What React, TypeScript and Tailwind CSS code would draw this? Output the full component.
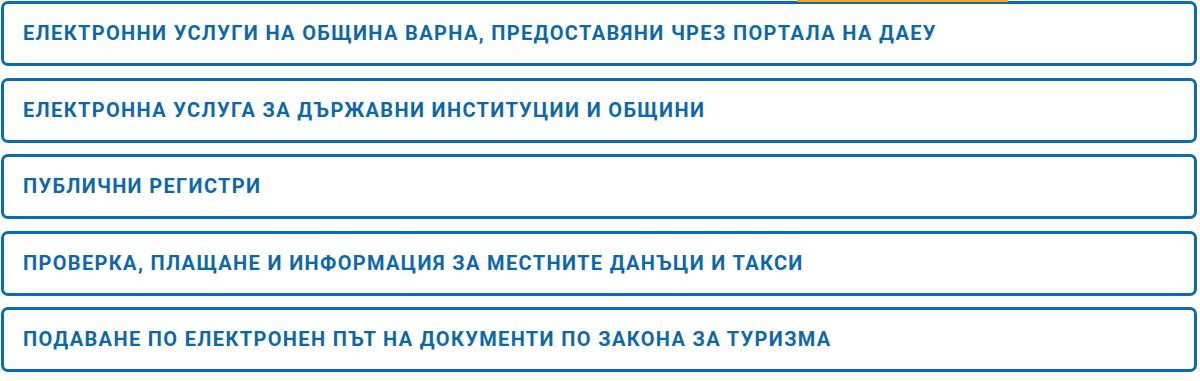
const items = [
  'ЕЛЕКТРОННИ УСЛУГИ НА ОБЩИНА ВАРНА, ПРЕДОСТАВЯНИ ЧРЕЗ ПОРТАЛА НА ДАЕУ',
  'ЕЛЕКТРОННА УСЛУГА ЗА ДЪРЖАВНИ ИНСТИТУЦИИ И ОБЩИНИ',
  'ПУБЛИЧНИ РЕГИСТРИ',
  'ПРОВЕРКА, ПЛАЩАНЕ И ИНФОРМАЦИЯ ЗА МЕСТНИТЕ ДАНЪЦИ И ТАКСИ',
  'ПОДАВАНЕ ПО ЕЛЕКТРОНЕН ПЪТ НА ДОКУМЕНТИ ПО ЗАКОНА ЗА ТУРИЗМА',
];

export default function App() {
  return (
    <div lang="bg" className="relative w-[1200px] h-[381px] bg-white pt-px pl-px pr-[3px] font-['Roboto','Noto_Sans',sans-serif]">
      {/* active tab indicator from the section above */}
      <div className="absolute left-[797px] top-0 w-[211px] h-[2px] bg-[#f5a31a] z-10" />
      <div className="flex flex-col gap-[11.5px]">
        {items.map((label) => (
          <a
            key={label}
            href="#"
            className="flex items-center h-[65px] px-[19px] pb-px border-[3px] border-[#0a6cb0] rounded-[7px] text-[#0d68ab] text-[20px] font-bold leading-none tracking-[1.35px]"
          >
            {label}
          </a>
        ))}
      </div>
    </div>
  );
}
